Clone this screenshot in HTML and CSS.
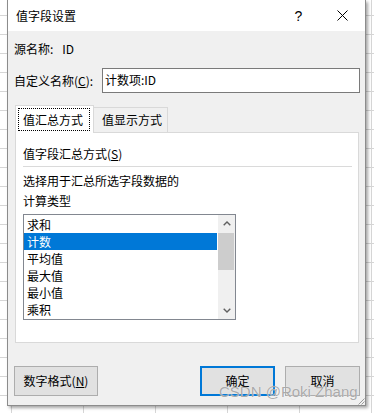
FILE: index.html
```html
<!DOCTYPE html>
<html lang="zh-CN">
<head>
<meta charset="utf-8">
<title>值字段设置</title>
<link rel="stylesheet" href="styles.css">
</head>
<body>
<div class="sheet">
  <div class="dialog">
    <div class="titlebar">
      <span class="title">值字段设置</span>
      <span class="help">?</span>
      <span class="close">
        <svg width="11" height="11" viewBox="0 0 11 11"><path d="M0.5 0.5 L10.5 10.5 M10.5 0.5 L0.5 10.5" stroke="#000" stroke-width="1" fill="none"/></svg>
      </span>
    </div>
    <div class="content">
      <div class="row-source"><span>源名称:</span><span class="source-val">ID</span></div>
      <div class="row-name">
        <span class="name-label">自定义名称(<u>C</u>):</span>
        <div class="input">计数项:ID</div>
      </div>
      <div class="tabs">
        <div class="tab tab-active"><span class="focus">值汇总方式</span></div>
        <div class="tab tab-inactive">值显示方式</div>
      </div>
      <div class="panel">
        <div class="heading">值字段汇总方式(<u>S</u>)</div>
        <div class="sep"></div>
        <div class="desc">选择用于汇总所选字段数据的<br>计算类型</div>
        <div class="listbox">
          <ul class="items">
            <li>求和</li>
            <li class="selected">计数</li>
            <li>平均值</li>
            <li>最大值</li>
            <li>最小值</li>
            <li>乘积</li>
          </ul>
          <div class="scrollbar">
            <div class="arrow"><svg width="8" height="5" viewBox="0 0 8 5"><path d="M0.7 4.3 L4 1 L7.3 4.3" stroke="#606060" stroke-width="1.4" fill="none"/></svg></div>
            <div class="thumb"></div>
            <div class="track"></div>
            <div class="arrow"><svg width="8" height="5" viewBox="0 0 8 5"><path d="M0.7 0.7 L4 4 L7.3 0.7" stroke="#606060" stroke-width="1.4" fill="none"/></svg></div>
          </div>
        </div>
      </div>
      <div class="buttons">
        <div class="btn btn-format">数字格式(<u>N</u>)</div>
        <div class="btn btn-ok">确定</div>
        <div class="btn btn-cancel">取消</div>
      </div>
    </div>
    <svg class="grip" width="8" height="8" viewBox="0 0 8 8"><path d="M7.5 1.5 L1.5 7.5 M7.5 4.5 L4.5 7.5" stroke="#9a9a9a" stroke-width="1" fill="none"/></svg>
  </div>
  <div class="watermark">CSDN @Roki Zhang</div>
</div>
</body>
</html>
```

FILE: styles.css
```css
* { box-sizing: border-box; }
html, body { margin: 0; padding: 0; }
body {
  width: 374px;
  height: 413px;
  overflow: hidden;
  font-family: "Noto Sans CJK SC", "Noto Sans", sans-serif;
  font-size: 12px;
  color: #000;
  background: #fff;
}
.sheet {
  position: relative;
  width: 374px;
  height: 413px;
  padding-left: 7px;
  background-color: #fff;
  background-image:
    linear-gradient(to right, #d6d6d6 1px, transparent 1px),
    linear-gradient(to bottom, #d6d6d6 1px, transparent 1px);
  background-size: 72px 19px;
  background-position: 11px 15px;
}
.dialog {
  position: relative;
  width: 359px;
  background: #f0f0f0;
  border: 1px solid #8c8c8c;
  border-top: none;
  box-shadow: 2px 2px 3px rgba(0, 0, 0, 0.35);
  display: flex;
  flex-direction: column;
}
.titlebar {
  height: 31px;
  background: #fff;
  display: flex;
  align-items: center;
  flex: none;
}
.title {
  flex: 1;
  padding-left: 8px;
  line-height: 20px;
}
.help, .close {
  width: 46px;
  height: 31px;
  display: flex;
  align-items: center;
  justify-content: center;
}
.help {
  font-family: "Liberation Sans", sans-serif;
  font-size: 14px;
  padding-left: 5px;
}
.close { padding-left: 1px; }
.content {
  padding: 8px 5px 9px 6px;
  display: flex;
  flex-direction: column;
}
.row-source {
  height: 20px;
  line-height: 20px;
  display: flex;
}
.source-val { margin-left: 9px; }
.row-name {
  margin-top: 9px;
  height: 25px;
  display: flex;
  align-items: center;
}
.name-label { width: 88px; line-height: 20px; }
.input {
  width: 258px;
  height: 25px;
  border: 1px solid #7a7a7a;
  background: #fff;
  padding-left: 2px;
  line-height: 22px;
}
.tabs {
  margin-top: 12px;
  margin-left: 1px;
  height: 27px;
  display: flex;
  align-items: flex-end;
}
.tab {
  border: 1px solid #d9d9d9;
  border-bottom: none;
}
.tab-active {
  position: relative;
  z-index: 2;
  width: 79px;
  height: 28px;
  margin-bottom: -1px;
  background: #fff;
  padding: 2px 3px 0 2px;
}
.focus {
  display: block;
  height: 23px;
  border: 1px dotted #000;
  line-height: 21px;
  padding-left: 4px;
}
.tab-inactive {
  width: 75px;
  height: 25px;
  margin-left: -1px;
  background: #f0f0f0;
  padding-left: 8px;
  line-height: 23px;
}
.panel {
  margin-left: 1px;
  width: 344px;
  height: 211px;
  background: #fff;
  border: 1px solid #d9d9d9;
  padding: 11px 6px 0 7px;
}
.heading { line-height: 20px; height: 20px; }
.sep {
  margin-top: 2px;
  height: 1px;
  background: #dadada;
}
.desc {
  margin-top: 4px;
  line-height: 20px;
}
.listbox {
  margin-top: 3px;
  width: 213px;
  height: 106px;
  border: 1px solid #828790;
  background: #fff;
  display: flex;
}
.items {
  list-style: none;
  margin: 0;
  padding: 1px 1px 0 0;
  flex: 1;
}
.items li {
  height: 17px;
  line-height: 17px;
  padding-left: 3px;
}
.items li.selected {
  background: #0078d7;
  color: #fff;
}
.scrollbar {
  width: 17px;
  background: #f0f0f0;
  display: flex;
  flex-direction: column;
}
.arrow {
  height: 17px;
  display: flex;
  align-items: center;
  justify-content: center;
}
.thumb {
  height: 37px;
  margin: 1px 1px 0 0;
  background: #cdcdcd;
}
.track { flex: 1; }
.buttons {
  margin-top: 23px;
  height: 30px;
  display: flex;
  gap: 10px;
}
.btn {
  height: 30px;
  background: #e1e1e1;
  border: 1px solid #adadad;
  display: flex;
  align-items: center;
  justify-content: center;
  line-height: 20px;
}
.btn-format { width: 84px; margin-right: auto; }
.btn-ok { width: 75px; border: 2px solid #0078d7; }
.btn-cancel { width: 75px; }
.grip {
  position: absolute;
  right: 0;
  bottom: 0;
}
.watermark {
  position: absolute;
  left: 219px;
  top: 383px;
  font-family: "Liberation Sans", sans-serif;
  font-size: 15px;
  line-height: 17px;
  color: rgba(160, 160, 160, 0.9);
  text-shadow: 0 0 1px rgba(255, 255, 255, 0.9);
  white-space: nowrap;
  pointer-events: none;
}
```
